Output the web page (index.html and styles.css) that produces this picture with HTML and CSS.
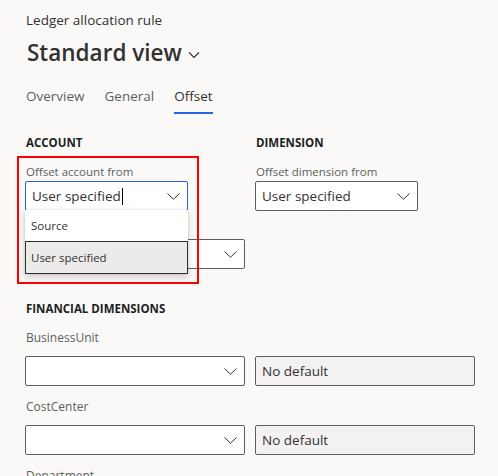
FILE: index.html
```html
<!DOCTYPE html>
<html>
<head>
<meta charset="utf-8">
<link rel="stylesheet" href="styles.css">
</head>
<body>
<div class="page">
  <div class="caption">Ledger allocation rule</div>
  <div class="title">Standard view <svg class="title-chev" width="12" height="8" viewBox="0 0 12 8"><path d="M1 1.5 L6 6.5 L11 1.5" fill="none" stroke="#323130" stroke-width="1.1"/></svg></div>
  <div class="tabs">
    <span class="tab">Overview</span>
    <span class="tab">General</span>
    <span class="tab active">Offset</span>
  </div>

  <div class="cols">
    <div class="col">
      <div class="section">ACCOUNT</div>
      <div class="label">Offset account from</div>
      <div class="anchor">
        <div class="dd narrow focus"><span class="dd-text">User specified<span class="caret"></span></span><svg class="chev" width="13" height="7" viewBox="0 0 13 7"><path d="M0.5 0.5 L6.5 6.2 L12.5 0.5" fill="none" stroke="#323130" stroke-width="1"/></svg></div>
        <div class="menu">
          <div class="item">Source</div>
          <div class="item selected">User specified</div>
        </div>
      </div>
      <div class="dd wide behind"><span class="dd-text"></span><svg class="chev" width="13" height="7" viewBox="0 0 13 7"><path d="M0.5 0.5 L6.5 6.2 L12.5 0.5" fill="none" stroke="#323130" stroke-width="1"/></svg></div>
    </div>
    <div class="col">
      <div class="section">DIMENSION</div>
      <div class="label">Offset dimension from</div>
      <div class="dd narrow"><span class="dd-text">User specified</span><svg class="chev" width="13" height="7" viewBox="0 0 13 7"><path d="M0.5 0.5 L6.5 6.2 L12.5 0.5" fill="none" stroke="#323130" stroke-width="1"/></svg></div>
    </div>
  </div>

  <div class="section fin">FINANCIAL DIMENSIONS</div>
  <div class="label2">BusinessUnit</div>
  <div class="row">
    <div class="dd wide"><span class="dd-text"></span><svg class="chev" width="13" height="7" viewBox="0 0 13 7"><path d="M0.5 0.5 L6.5 6.2 L12.5 0.5" fill="none" stroke="#323130" stroke-width="1"/></svg></div>
    <div class="ro">No default</div>
  </div>
  <div class="label2">CostCenter</div>
  <div class="row">
    <div class="dd wide"><span class="dd-text"></span><svg class="chev" width="13" height="7" viewBox="0 0 13 7"><path d="M0.5 0.5 L6.5 6.2 L12.5 0.5" fill="none" stroke="#323130" stroke-width="1"/></svg></div>
    <div class="ro">No default</div>
  </div>
  <div class="label2">Department</div>

  <div class="highlight"></div>
</div>
</body>
</html>
```
FILE: styles.css
```css
html, body {
  margin: 0;
  padding: 0;
  background: #faf9f8;
  overflow: hidden;
}
body {
  font-family: "Open Sans", "Noto Sans", sans-serif;
  color: #323130;
  width: 498px;
  height: 476px;
}
.page {
  position: relative;
  padding: 10px 0 0 25px;
  height: 466px;
  overflow: hidden;
}
.caption {
  font-size: 13.5px;
  line-height: 20px;
  padding-left: 1px;
}
.title {
  margin-top: 8px;
  font-size: 22.5px;
  font-weight: 600;
  line-height: 30px;
  padding-left: 2px;
  display: flex;
  align-items: center;
  gap: 6px;
}
.title-chev {
  margin-top: 4px;
}
.tabs {
  margin-top: 18px;
  display: flex;
  gap: 20px;
  padding-left: 1px;
}
.tab {
  font-size: 13.5px;
  line-height: 20px;
  color: #605e5c;
  padding-bottom: 6px;
  border-bottom: 2px solid transparent;
}
.tab.active {
  color: #323130;
  border-bottom-color: #2266e3;
}
.cols {
  display: flex;
  gap: 10px;
  margin-top: 21px;
}
.col {
  width: 220px;
}
.section {
  font-size: 11.5px;
  font-weight: 700;
  line-height: 16px;
  color: #201f1e;
  padding-left: 1px;
}
.label {
  margin-top: 13px;
  font-size: 11.5px;
  line-height: 16px;
  color: #605e5c;
  padding-left: 1px;
}
.anchor {
  position: relative;
  margin-top: 1px;
}
.dd {
  box-sizing: border-box;
  height: 30px;
  border: 1px solid #605e5c;
  border-radius: 2px;
  background: #ffffff;
  display: flex;
  align-items: center;
  justify-content: space-between;
  padding: 0 6px 0 6px;
}
.dd.narrow {
  width: 163px;
}
.dd.wide {
  width: 220px;
}
.dd.focus {
  border-color: #2266e3;
}
.dd.behind {
  margin-top: 28px;
}
.col:last-child .dd {
  margin-top: 1px;
}
.dd-text {
  font-size: 13.5px;
  color: #323130;
  display: flex;
  align-items: center;
}
.caret {
  display: inline-block;
  width: 1px;
  height: 17px;
  background: #000;
  margin-left: 1px;
}
.chev {
  margin-right: 1px;
}
.menu {
  position: absolute;
  left: 0;
  top: 29px;
  width: 163px;
  background: #ffffff;
  box-shadow: 0 3px 7px rgba(0,0,0,0.18), 0 0 2px rgba(0,0,0,0.12);
  z-index: 2;
}
.item {
  box-sizing: border-box;
  height: 31px;
  font-size: 11.5px;
  line-height: 31px;
  padding-left: 6px;
  color: #323130;
}
.item.selected {
  height: 33px;
  line-height: 31px;
  background: #edebe9;
  border: 1px solid #323130;
  padding-left: 5px;
}
.fin {
  margin-top: 32px;
}
.label2 {
  margin-top: 11px;
  font-size: 12px;
  line-height: 20px;
  color: #605e5c;
  padding-left: 1px;
}
.row {
  display: flex;
  gap: 10px;
  margin-top: 8px;
}
.ro {
  box-sizing: border-box;
  width: 220px;
  height: 30px;
  border: 1px solid #605e5c;
  border-radius: 2px;
  background: #f3f2f1;
  font-size: 13.5px;
  line-height: 28px;
  padding-left: 6px;
}
.highlight {
  position: absolute;
  left: 17px;
  top: 156px;
  width: 178px;
  height: 124px;
  border: 2px solid #ff0000;
  z-index: 3;
}
```
